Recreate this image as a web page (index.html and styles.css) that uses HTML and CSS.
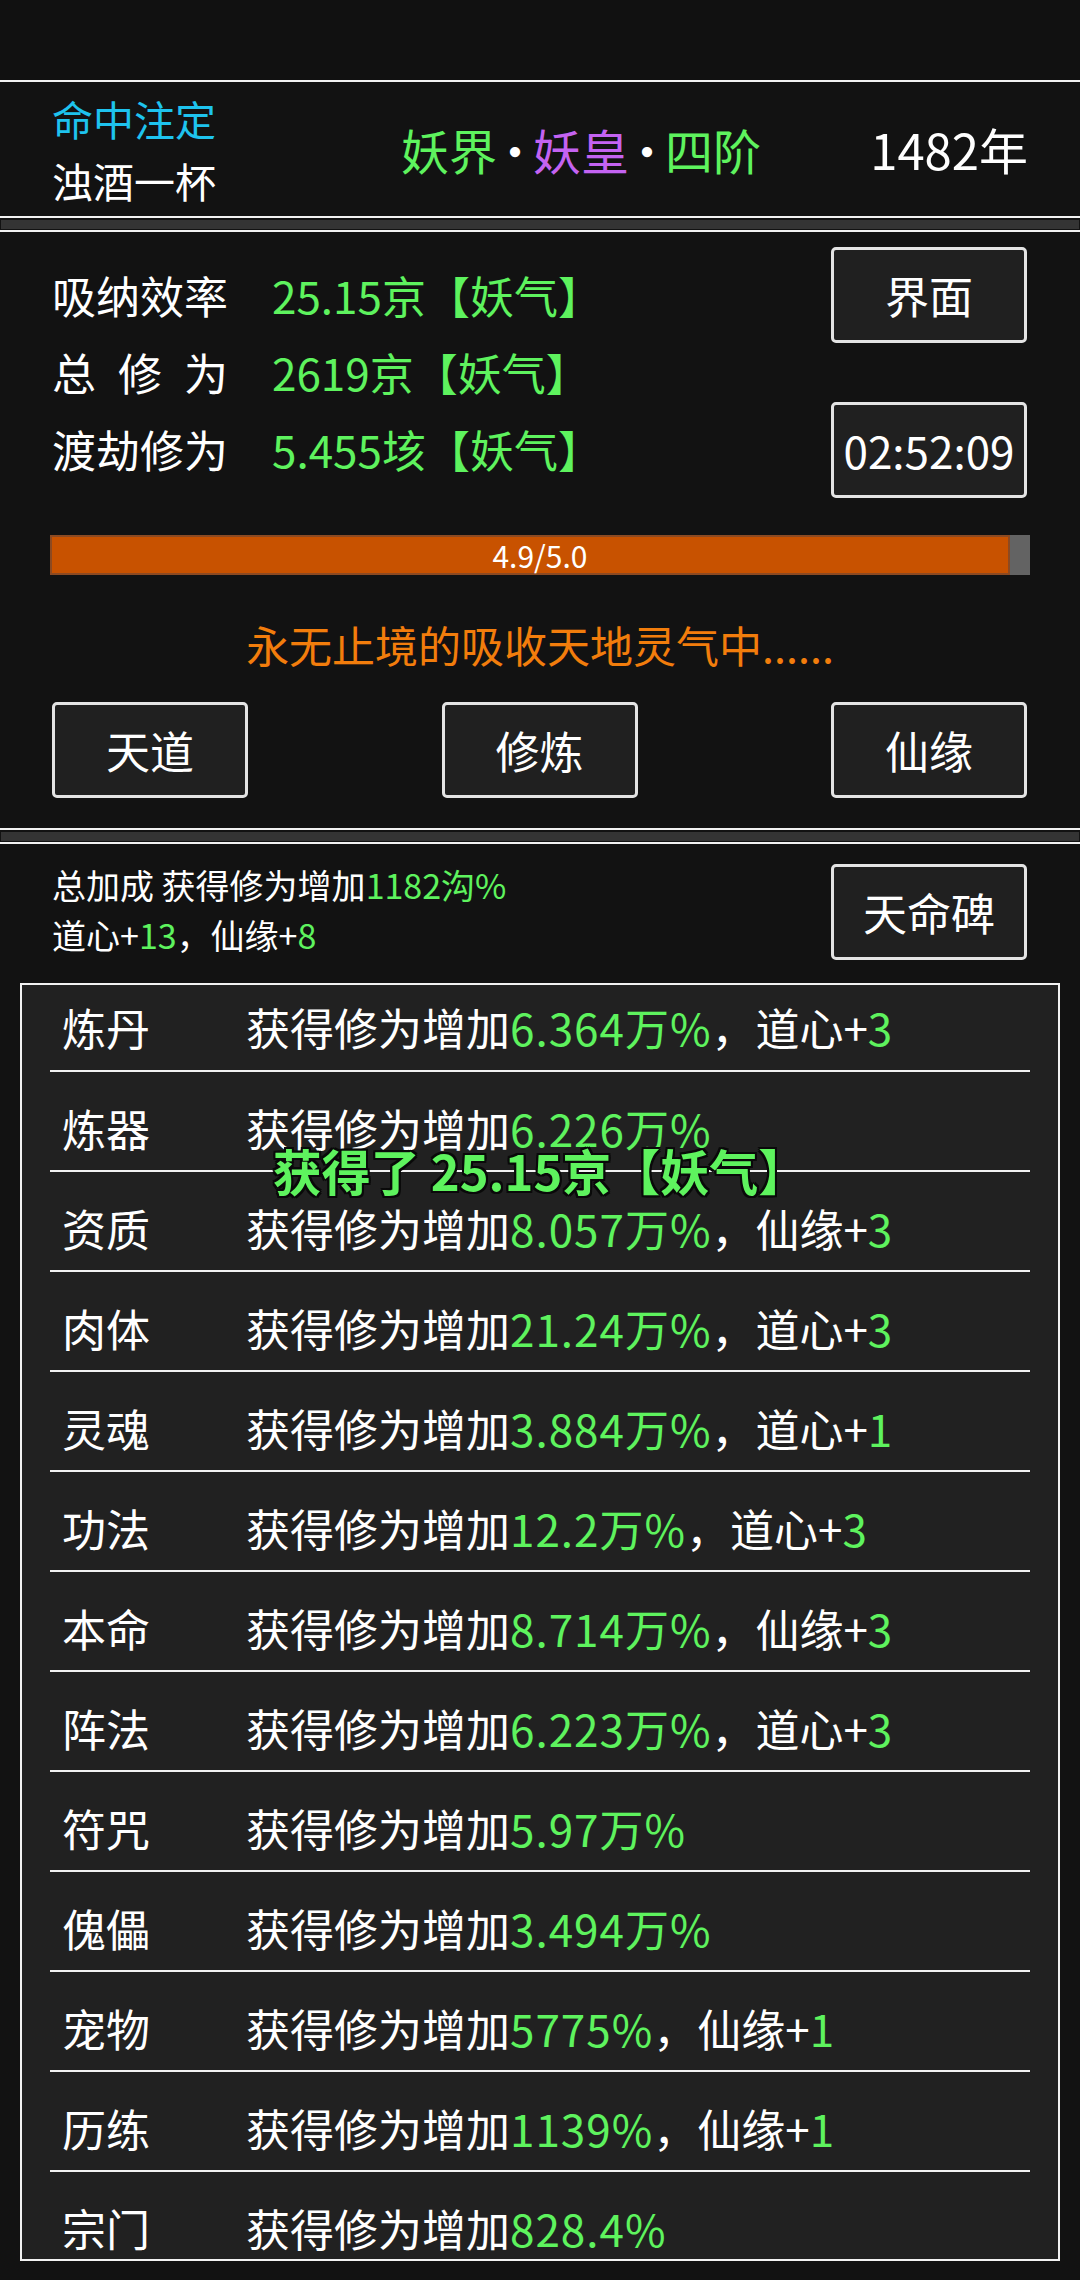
FILE: index.html
```html
<!DOCTYPE html>
<html lang="zh">
<head>
  <meta charset="UTF-8">
  <meta name="viewport" content="width=device-width, initial-scale=1.0">
  <title>修仙</title>
  <link rel="stylesheet" href="styles.css">
</head>
<body>
  <div class="status-bar"></div>

  <header class="realm-bar">
    <div class="fate">
      <p class="fate-title">命中注定</p>
      <p class="fate-name">浊酒一杯</p>
    </div>
    <div class="realm"><span class="green">妖界</span><span class="dot">·</span><span class="purple">妖皇</span><span class="dot">·</span><span class="green">四阶</span></div>
    <div class="year">1482年</div>
  </header>

  <div class="strip"></div>

  <section class="panel cultivate">
    <div class="stats-top">
      <div class="stats">
        <div class="stat"><span class="stat-label">吸纳效率</span><span class="green">25.15京【妖气】</span></div>
        <div class="stat"><span class="stat-label spaced">总修为</span><span class="green">2619京【妖气】</span></div>
        <div class="stat"><span class="stat-label">渡劫修为</span><span class="green">5.455垓【妖气】</span></div>
      </div>
      <div class="side-buttons">
        <button class="btn">界面</button>
        <button class="btn">02:52:09</button>
      </div>
    </div>
    <div class="progress">
      <div class="progress-fill" style="width: 98%"></div>
      <span class="progress-text">4.9/5.0</span>
    </div>
    <p class="status-msg">永无止境的吸收天地灵气中......</p>
    <div class="action-row">
      <button class="btn">天道</button>
      <button class="btn">修炼</button>
      <button class="btn">仙缘</button>
    </div>
  </section>

  <div class="strip"></div>

  <section class="panel bonus">
    <div class="bonus-top">
      <div class="bonus-summary">
        <p>总加成 获得修为增加<span class="green">1182沟%</span></p>
        <p>道心+<span class="green">13</span>，仙缘+<span class="green">8</span></p>
      </div>
      <button class="btn">天命碑</button>
    </div>
    <div class="bonus-list">
      <div class="bonus-row"><span class="row-name">炼丹</span><span>获得修为增加<span class="num">6.364万%</span>，道心+<span class="green">3</span></span></div>
      <div class="bonus-row"><span class="row-name">炼器</span><span>获得修为增加<span class="num">6.226万%</span></span></div>
      <div class="bonus-row"><span class="row-name">资质</span><span>获得修为增加<span class="num">8.057万%</span>，仙缘+<span class="green">3</span></span></div>
      <div class="bonus-row"><span class="row-name">肉体</span><span>获得修为增加<span class="num">21.24万%</span>，道心+<span class="green">3</span></span></div>
      <div class="bonus-row"><span class="row-name">灵魂</span><span>获得修为增加<span class="num">3.884万%</span>，道心+<span class="green">1</span></span></div>
      <div class="bonus-row"><span class="row-name">功法</span><span>获得修为增加<span class="num">12.2万%</span>，道心+<span class="green">3</span></span></div>
      <div class="bonus-row"><span class="row-name">本命</span><span>获得修为增加<span class="num">8.714万%</span>，仙缘+<span class="green">3</span></span></div>
      <div class="bonus-row"><span class="row-name">阵法</span><span>获得修为增加<span class="num">6.223万%</span>，道心+<span class="green">3</span></span></div>
      <div class="bonus-row"><span class="row-name">符咒</span><span>获得修为增加<span class="num">5.97万%</span></span></div>
      <div class="bonus-row"><span class="row-name">傀儡</span><span>获得修为增加<span class="num">3.494万%</span></span></div>
      <div class="bonus-row"><span class="row-name">宠物</span><span>获得修为增加<span class="num">5775%</span>，仙缘+<span class="green">1</span></span></div>
      <div class="bonus-row"><span class="row-name">历练</span><span>获得修为增加<span class="num">1139%</span>，仙缘+<span class="green">1</span></span></div>
      <div class="bonus-row"><span class="row-name">宗门</span><span>获得修为增加<span class="num">828.4%</span></span></div>
    </div>
  </section>

  <div class="toast">获得了 25.15京【妖气】</div>
</body>
</html>
```

FILE: styles.css
```css
body {
    margin: 0;
    background-color: #121212;
    color: #ffffff;
    font-family: "Noto Sans CJK SC", "Noto Sans", sans-serif;
    position: relative;
    height: 2280px;
    overflow: hidden;
}
p {
    margin: 0;
}
.green,
.num {
    color: #5ef35e;
}
.num {
    letter-spacing: 1px;
}
.purple {
    color: #c463f2;
}
.status-bar {
    height: 80px;
    background-color: #111111;
}
.realm-bar {
    height: 134px;
    border-top: 2px solid #f2f2f2;
    border-bottom: 2px solid #f2f2f2;
    display: flex;
    align-items: center;
    padding-left: 52px;
}
.fate {
    width: 349px;
    font-size: 41px;
    line-height: 62px;
}
.fate-title {
    color: #1ec3ee;
}
.realm {
    font-size: 48px;
    line-height: 60px;
}
.realm .dot {
    margin: 0 -6px;
}
.year {
    margin-left: auto;
    padding-right: 52px;
    font-size: 49px;
    line-height: 60px;
}
.strip {
    height: 9px;
    margin: 2px 1px 1px;
    background-color: #343434;
}
.panel {
    border-top: 2px solid #f2f2f2;
    border-bottom: 2px solid #f2f2f2;
}
.cultivate {
    padding: 0 50px 30px;
}
.stats-top {
    display: flex;
    justify-content: space-between;
    align-items: flex-start;
    padding-top: 15px;
}
.stats {
    padding: 10px 0 0 2px;
    font-size: 44px;
    line-height: 77px;
}
.stat {
    display: flex;
}
.stat-label {
    width: 220px;
}
.stat-label.spaced {
    letter-spacing: 22px;
}
.side-buttons {
    display: flex;
    flex-direction: column;
    gap: 59px;
    margin-right: 3px;
}
.btn {
    width: 196px;
    height: 96px;
    box-sizing: border-box;
    border: 3px solid #e4e4e4;
    border-radius: 5px;
    background-color: #202020;
    color: #ffffff;
    font-family: "Noto Sans CJK SC", sans-serif;
    font-size: 44px;
    padding: 0;
}
.progress {
    position: relative;
    height: 40px;
    margin-top: 37px;
    background-color: #636363;
}
.progress-fill {
    height: 100%;
    box-sizing: border-box;
    background-color: #c85200;
    border: 2px solid #8c4a22;
}
.progress-text {
    position: absolute;
    left: 0;
    right: 0;
    top: 0;
    text-align: center;
    font-size: 30px;
    line-height: 40px;
}
.status-msg {
    margin-top: 44px;
    text-align: center;
    color: #f27d0c;
    font-size: 43px;
    line-height: 50px;
}
.action-row {
    display: flex;
    justify-content: space-between;
    margin: 33px 3px 0 2px;
}
.bonus {
    border-bottom: none;
}
.bonus-top {
    display: flex;
    justify-content: space-between;
    align-items: flex-start;
    padding: 16px 53px 0 52px;
}
.bonus-summary {
    font-size: 34px;
    line-height: 50px;
}
.bonus-top .btn {
    margin-top: 4px;
}
.bonus-list {
    margin: 23px 20px 0;
    height: 1278px;
    box-sizing: border-box;
    border: 2px solid #f2f2f2;
    background-color: #212121;
    overflow: hidden;
}
.bonus-row {
    display: flex;
    margin: 0 28px;
    padding: 34px 0 20px 12px;
    border-bottom: 2px solid #f2f2f2;
    font-size: 44px;
    line-height: 44px;
    white-space: nowrap;
}
.bonus-row:first-child {
    padding-top: 20px;
    padding-bottom: 21px;
}
.row-name {
    width: 184px;
}
.toast {
    position: absolute;
    left: 0;
    right: 0;
    top: 1142px;
    text-align: center;
    color: #5ef35e;
    font-size: 49px;
    font-weight: bold;
    line-height: 56px;
    text-shadow: -2px 0 #0a0a0a, 2px 0 #0a0a0a, 0 -2px #0a0a0a, 0 2px #0a0a0a, 2px 2px #0a0a0a, -2px -2px #0a0a0a, 2px -2px #0a0a0a, -2px 2px #0a0a0a;
}
```
